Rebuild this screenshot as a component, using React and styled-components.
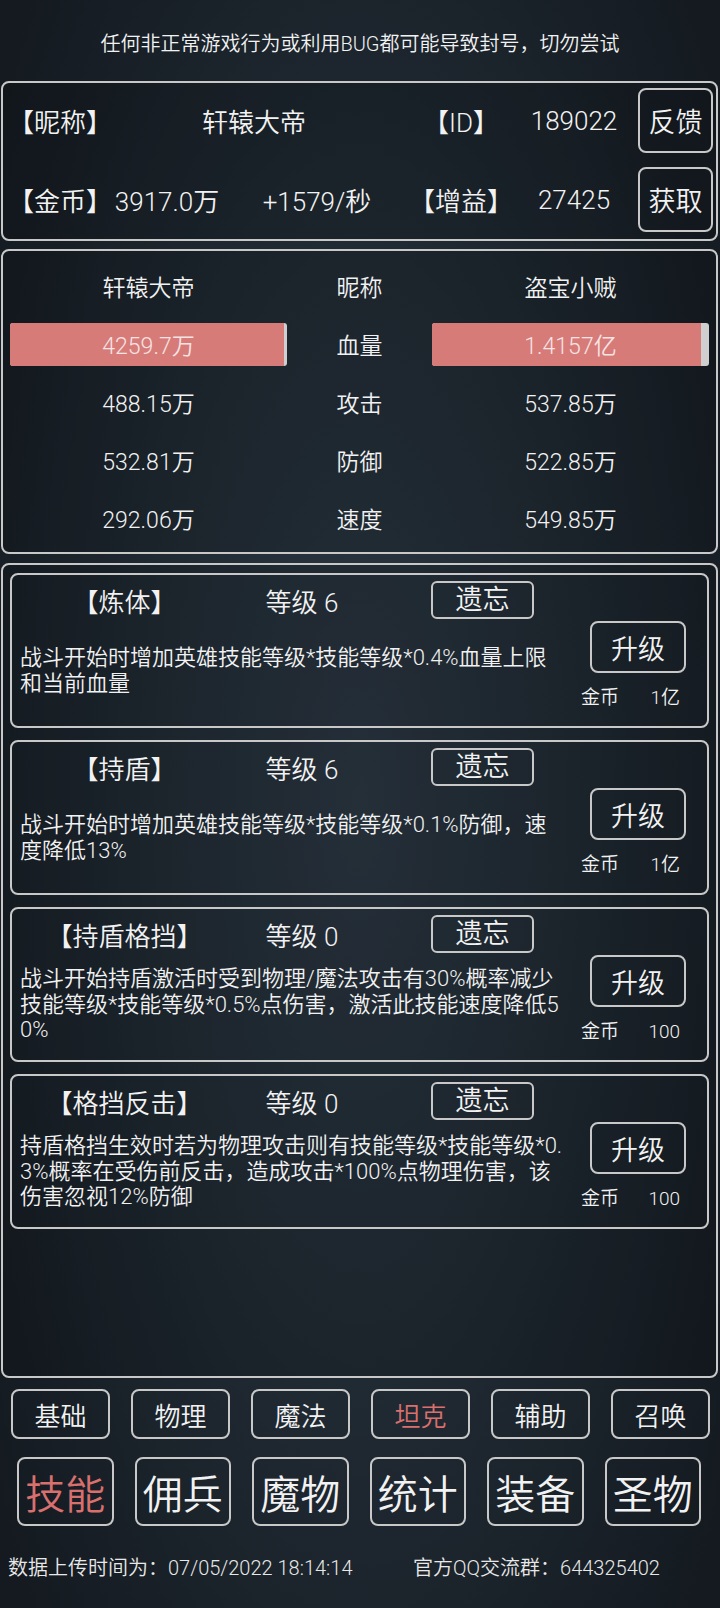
import styled, { createGlobalStyle } from "styled-components";

const GlobalStyle = createGlobalStyle`
  html, body {
    margin: 0;
    padding: 0;
    background: #161d23;
  }
  * {
    box-sizing: border-box;
  }
`;

const FONT = `Roboto, "Noto Sans CJK SC", sans-serif`;
const LINE = "#c8c8c8";
const RED = "#d9706e";

const stats = [
  { left: "488.15万", name: "攻击", right: "537.85万" },
  { left: "532.81万", name: "防御", right: "522.85万" },
  { left: "292.06万", name: "速度", right: "549.85万" },
];

const skills = [
  {
    title: "【炼体】",
    level: 6,
    lines: ["战斗开始时增加英雄技能等级*技能等级*0.4%血量上限", "和当前血量"],
    cost: "1亿",
  },
  {
    title: "【持盾】",
    level: 6,
    lines: ["战斗开始时增加英雄技能等级*技能等级*0.1%防御，速", "度降低13%"],
    cost: "1亿",
  },
  {
    title: "【持盾格挡】",
    level: 0,
    lines: [
      "战斗开始持盾激活时受到物理/魔法攻击有30%概率减少",
      "技能等级*技能等级*0.5%点伤害，激活此技能速度降低5",
      "0%",
    ],
    cost: "100",
  },
  {
    title: "【格挡反击】",
    level: 0,
    lines: [
      "持盾格挡生效时若为物理攻击则有技能等级*技能等级*0.",
      "3%概率在受伤前反击，造成攻击*100%点物理伤害，该",
      "伤害忽视12%防御",
    ],
    cost: "100",
  },
];

const subTabs = ["基础", "物理", "魔法", "坦克", "辅助", "召唤"];
const mainTabs = ["技能", "佣兵", "魔物", "统计", "装备", "圣物"];

const App = () => {
  return (
    <>
      <GlobalStyle />
      <Page>
        <Notice>任何非正常游戏行为或利用BUG都可能导致封号，切勿尝试</Notice>

        {/* player info */}
        <InfoPanel>
          <Label>【昵称】</Label>
          <Cell $span={2}>轩辕大帝</Cell>
          <Cell>【ID】</Cell>
          <Cell>189022</Cell>
          <SideButton>反馈</SideButton>

          <Label>【金币】</Label>
          <Cell>3917.0万</Cell>
          <Cell>+1579/秒</Cell>
          <Cell>【增益】</Cell>
          <Cell>27425</Cell>
          <SideButton>获取</SideButton>
        </InfoPanel>

        {/* battle compare */}
        <StatsPanel>
          <StatText>轩辕大帝</StatText>
          <StatText>昵称</StatText>
          <StatText>盗宝小贼</StatText>

          <HpBar>
            <HpFill style={{ width: "99%" }} />
            <HpText>4259.7万</HpText>
          </HpBar>
          <StatText>血量</StatText>
          <HpBar>
            <HpFill style={{ width: "97.2%" }} />
            <HpText>1.4157亿</HpText>
          </HpBar>

          {stats.map((s) => (
            <StatRow key={s.name}>
              <StatText>{s.left}</StatText>
              <StatText>{s.name}</StatText>
              <StatText>{s.right}</StatText>
            </StatRow>
          ))}
        </StatsPanel>

        {/* skills */}
        <SkillPanel>
          {skills.map((sk) => (
            <SkillCard key={sk.title}>
              <SkillHead>
                <SkillTitle>{sk.title}</SkillTitle>
                <SkillLevel>等级 {sk.level}</SkillLevel>
                <ForgetButton>遗忘</ForgetButton>
              </SkillHead>
              <SkillBody>
                <SkillDesc>
                  {sk.lines.map((l, i) => (
                    <span key={i}>{l}</span>
                  ))}
                </SkillDesc>
                <UpgradeCol>
                  <UpgradeButton>升级</UpgradeButton>
                  <CostRow>
                    <span>金币</span>
                    <span>{sk.cost}</span>
                  </CostRow>
                </UpgradeCol>
              </SkillBody>
            </SkillCard>
          ))}
        </SkillPanel>

        <SubTabs>
          {subTabs.map((t) => (
            <SubTab key={t} $active={t === "坦克"}>
              {t}
            </SubTab>
          ))}
        </SubTabs>

        <MainTabs>
          {mainTabs.map((t) => (
            <MainTab key={t} $active={t === "技能"}>
              {t}
            </MainTab>
          ))}
        </MainTabs>

        <Footer>
          <span>数据上传时间为：07/05/2022 18:14:14</span>
          <span>官方QQ交流群：644325402</span>
        </Footer>
      </Page>
    </>
  );
};

export default App;

// styled components css

const Page = styled.div`
  width: 720px;
  height: 1608px;
  overflow: hidden;
  display: flex;
  flex-direction: column;
  font-family: ${FONT};
  font-weight: 350;
  color: #f2f2f2;
  background: radial-gradient(
    ellipse 62% 75% at 50% 50%,
    #2b3742 0%,
    #212b34 45%,
    #171e25 85%,
    #141a20 100%
  );

  button {
    font-weight: 350;
  }
`;

const Notice = styled.div`
  height: 81px;
  padding-top: 4px;
  display: flex;
  align-items: center;
  justify-content: center;
  font-size: 20px;
`;

const Panel = styled.section`
  margin: 0 2px 0 1px;
  border: 2px solid ${LINE};
  border-radius: 8px;
  background: rgba(0, 0, 0, 0.14);
`;

const InfoPanel = styled(Panel)`
  height: 160px;
  padding: 5px 3px 7px 5px;
  display: grid;
  grid-template-columns: 96px 126px 174px 114px 112px 1fr;
  grid-template-rows: 65px 65px;
  row-gap: 14px;
  align-items: center;
  font-size: 26px;
`;

const Label = styled.div`
  white-space: nowrap;
`;

const Cell = styled.div`
  text-align: center;
  white-space: nowrap;
  grid-column: span ${(p) => p.$span || 1};
`;

const SideButton = styled.button`
  justify-self: end;
  width: 75px;
  height: 65px;
  padding: 0;
  border: 2px solid ${LINE};
  border-radius: 8px;
  background: transparent;
  color: #f2f2f2;
  font-family: ${FONT};
  font-size: 27px;
`;

const StatsPanel = styled(Panel)`
  margin-top: 8px;
  height: 305px;
  padding: 6px 7px 4px;
  display: grid;
  grid-template-columns: 277px 1fr 277px;
  grid-auto-rows: 58px;
  align-items: center;
  font-size: 23px;
`;

const StatRow = styled.div`
  display: contents;
`;

const StatText = styled.div`
  text-align: center;
  white-space: nowrap;
`;

const HpBar = styled.div`
  position: relative;
  height: 43px;
  background: #cfcfcf;
  border-radius: 3px;
  overflow: hidden;
  display: flex;
  align-items: center;
  justify-content: center;
`;

const HpFill = styled.div`
  position: absolute;
  left: 0;
  top: 0;
  bottom: 0;
  background: #d77b79;
`;

const HpText = styled.span`
  position: relative;
  color: #f6e4e4;
`;

const SkillPanel = styled(Panel)`
  margin-top: 9px;
  height: 815px;
  padding: 8px 7px;
  display: flex;
  flex-direction: column;
  gap: 12px;
`;

const SkillCard = styled.div`
  height: 155px;
  border: 2px solid ${LINE};
  border-radius: 8px;
  padding: 6px 8px 6px 0;
  display: flex;
  flex-direction: column;
  gap: 2px;
`;

const SkillHead = styled.div`
  height: 38px;
  display: flex;
  align-items: center;
  font-size: 26px;
`;

const SkillTitle = styled.div`
  width: 225px;
  text-align: center;
  white-space: nowrap;
`;

const SkillLevel = styled.div`
  width: 130px;
  text-align: center;
  white-space: nowrap;
`;

const ForgetButton = styled.button`
  margin-left: 64px;
  width: 103px;
  height: 38px;
  padding: 0;
  border: 2px solid ${LINE};
  border-radius: 6px;
  background: transparent;
  color: #f2f2f2;
  font-family: ${FONT};
  font-size: 27px;
  line-height: 1;
`;

const SkillBody = styled.div`
  flex: 1;
  display: flex;
  padding-left: 8px;
`;

const SkillDesc = styled.div`
  width: 545px;
  align-self: center;
  display: flex;
  flex-direction: column;
  font-size: 22px;
  line-height: 25.5px;
  white-space: nowrap;
`;

const UpgradeCol = styled.div`
  margin-left: 13px;
  width: 120px;
  display: flex;
  flex-direction: column;
`;

const UpgradeButton = styled.button`
  margin-left: 12px;
  width: 96px;
  height: 52px;
  padding: 0;
  border: 2px solid ${LINE};
  border-radius: 8px;
  background: transparent;
  color: #f2f2f2;
  font-family: ${FONT};
  font-size: 27px;
`;

const CostRow = styled.div`
  margin-top: 13px;
  margin-left: 3px;
  width: 99px;
  display: flex;
  justify-content: space-between;
  font-size: 19px;
  line-height: 24px;
`;

const SubTabs = styled.div`
  margin-top: 11px;
  padding: 0 10px 0 11px;
  display: grid;
  grid-template-columns: repeat(6, 99px);
  column-gap: 21px;
`;

const SubTab = styled.button`
  height: 50px;
  padding: 0;
  border: 2px solid ${LINE};
  border-radius: 8px;
  background: transparent;
  color: ${(p) => (p.$active ? RED : "#f2f2f2")};
  font-family: ${FONT};
  font-size: 26px;
`;

const MainTabs = styled.div`
  margin-top: 18px;
  padding-left: 17px;
  display: grid;
  grid-template-columns: repeat(6, 96.5px);
  column-gap: 21px;
`;

const MainTab = styled.button`
  height: 69px;
  padding: 0;
  border: 2px solid ${LINE};
  border-radius: 8px;
  background: transparent;
  color: ${(p) => (p.$active ? RED : "#f2f2f2")};
  font-family: ${FONT};
  font-size: 40px;
`;

const Footer = styled.div`
  margin-top: 30px;
  padding-left: 8px;
  display: grid;
  grid-template-columns: 405px auto;
  font-size: 20px;
  line-height: 24px;
  color: #e8e8e8;
  white-space: nowrap;
`;
